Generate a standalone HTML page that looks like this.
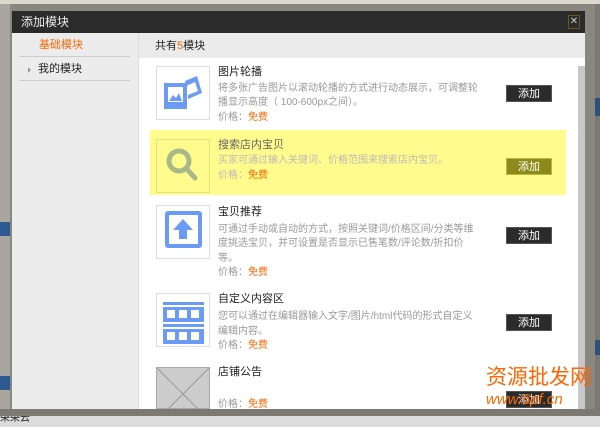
<!DOCTYPE html>
<html><head><meta charset="utf-8"><style>
*{margin:0;padding:0;box-sizing:border-box}
body{width:600px;height:427px;overflow:hidden;position:relative;background:#8a8680;font-family:"Liberation Sans","Noto Sans CJK SC",sans-serif;font-size:10px;color:#222}
.a{position:absolute}
.t{position:absolute;white-space:nowrap;line-height:14px}
.g{color:#999}
.r{color:#f60}
.h{font-size:11px}
.btn{position:absolute;left:506px;width:46px;height:17px;background:#2b2b2b;color:#fff;text-align:center;line-height:16px;font-size:11px;border:1px solid #555}
.ic{position:absolute;left:156px;width:54px;height:54px;border:1px solid #ddd;background:#fff}
</style></head><body>
<div class="a" style="left:0;top:0;width:10px;height:427px;background:#a9a59f"></div>
<div class="a" style="left:595px;top:0;width:5px;height:427px;background:#7c7872"></div>
<div class="a" style="left:595px;top:98px;width:5px;height:18px;background:#2c4f7c"></div>
<div class="a" style="left:595px;top:340px;width:5px;height:15px;background:#2c4f7c"></div>
<div class="a" style="left:0;top:0;width:600px;height:4px;background:#ddd8cc"></div>
<div class="a" style="left:0;top:416px;width:600px;height:11px;background:#dcdcdc"></div>
<div class="t" style="left:0;top:412px;font-size:10px">朵朵云</div>
<div class="a" style="left:0;top:222px;width:10px;height:14px;background:#2c5a90"></div>
<div class="a" style="left:0;top:376px;width:10px;height:14px;background:#2c5a90"></div>
<div class="a" style="left:12px;top:11px;width:573px;height:22px;background:#2b2b2b"></div>
<div class="t" style="left:21px;top:15px;color:#eee;font-size:12px">添加模块</div>
<div class="a" style="left:568px;top:15px;width:12px;height:14px;border:1px solid #6a5420;color:#ccc;font-size:10px;line-height:12px;text-align:center">✕</div>
<div class="a" style="left:12px;top:33px;width:573px;height:376px;background:#fff"></div>
<div class="a" style="left:12px;top:33px;width:127px;height:376px;background:#ececec;border-right:1px solid #ddd"></div>
<div class="a" style="left:139px;top:33px;width:446px;height:25px;background:#ebebeb"></div>
<div class="t h" style="left:39px;top:38px;color:#f60">基础模块</div>
<div class="a" style="left:19px;top:56px;width:111px;height:1px;background:#ccc"></div>
<div class="a" style="left:28px;top:67px;border-left:3px solid #999;border-top:3px solid transparent;border-bottom:3px solid transparent"></div>
<div class="t h" style="left:38px;top:62px">我的模块</div>
<div class="a" style="left:19px;top:80px;width:111px;height:1px;background:#ccc"></div>
<div class="t h" style="left:155px;top:39px">共有<span class="r">5</span>模块</div>
<div class="a" style="left:578px;top:66px;width:7px;height:343px;background:#c8c8c8"></div>
<div class="ic" style="top:66px"><svg width="52" height="52"><rect x="7" y="16" width="23" height="26" fill="#6b9bf5"/><rect x="11" y="20" width="15" height="15" fill="#fff"/><path d="M12 34l4-6 3 3 3-5 3 8z" fill="#6b9bf5"/><path d="M28 14l12-5 5 17-14 6 0-4 10-4-3-9-9 4z" fill="#6b9bf5"/></svg></div>
<div class="t h" style="left:218px;top:65px">图片轮播</div>
<div class="t g" style="left:218px;top:82px">将多张广告图片以滚动轮播的方式进行动态展示，可调整轮</div>
<div class="t g" style="left:218px;top:96px">播显示高度（ 100-600px之间）。</div>
<div class="t g" style="left:218px;top:111px">价格：<span class="r">免费</span></div>
<div class="btn" style="top:85px">添加</div>
<div class="a" style="left:150px;top:130px;width:416px;height:65px;background:#fffb8c"></div>
<div class="ic" style="top:139px;background:#fffb8c;border-color:#e6e27a"><svg width="52" height="52"><circle cx="22" cy="21" r="10" fill="none" stroke="#a8b889" stroke-width="5"/><path d="M29 28l9 10" stroke="#a8b889" stroke-width="5" stroke-linecap="round"/></svg></div>
<div class="t h" style="left:218px;top:138px;color:#666">搜索店内宝贝</div>
<div class="t" style="left:218px;top:154px;color:#bbb">买家可通过输入关键词、价格范围来搜索店内宝贝。</div>
<div class="t" style="left:218px;top:169px;color:#bbb">价格：<span class="r">免费</span></div>
<div class="btn" style="top:158px;background:#8b8a1a;border-color:#bab740">添加</div>
<div class="ic" style="top:205px"><svg width="52" height="52"><rect x="8" y="5" width="37" height="37" rx="3" fill="#6b9bf5"/><rect x="12" y="9" width="29" height="29" fill="#fff"/><path d="M26 13l-10 11h6v9h8v-9h6z" fill="#6b9bf5"/></svg></div>
<div class="t h" style="left:218px;top:205px">宝贝推荐</div>
<div class="t g" style="left:218px;top:223px">可通过手动或自动的方式，按照关键词/价格区间/分类等维</div>
<div class="t g" style="left:218px;top:237px">度挑选宝贝，并可设置是否显示已售笔数/评论数/折扣价</div>
<div class="t g" style="left:218px;top:252px">等。</div>
<div class="t g" style="left:218px;top:266px">价格：<span class="r">免费</span></div>
<div class="btn" style="top:227px">添加</div>
<div class="ic" style="top:293px"><svg width="52" height="52"><rect x="6" y="8" width="41" height="3" fill="#6b9bf5"/><rect x="6" y="13" width="41" height="15" fill="#6b9bf5"/><rect x="6" y="30" width="41" height="3" fill="#6b9bf5"/><rect x="6" y="35" width="41" height="15" fill="#6b9bf5"/><g fill="#fff"><rect x="10" y="16" width="8" height="8"/><rect x="22" y="16" width="8" height="8"/><rect x="34" y="16" width="8" height="8"/><rect x="10" y="38" width="8" height="8"/><rect x="22" y="38" width="8" height="8"/><rect x="34" y="38" width="8" height="8"/></g></svg></div>
<div class="t h" style="left:218px;top:292px">自定义内容区</div>
<div class="t g" style="left:218px;top:310px">您可以通过在编辑器输入文字/图片/html代码的形式自定义</div>
<div class="t g" style="left:218px;top:325px">编辑内容。</div>
<div class="t g" style="left:218px;top:339px">价格：<span class="r">免费</span></div>
<div class="btn" style="top:314px">添加</div>
<div class="ic" style="top:367px;background:#ccc;border-color:#aaa;height:42px"><svg width="52" height="42"><path d="M0 0L52 52M52 0L0 52" stroke="#999"/></svg></div>
<div class="t h" style="left:218px;top:365px">店铺公告</div>
<div class="t g" style="left:218px;top:398px">价格：<span class="r">免费</span></div>
<div class="btn" style="top:391px">添加</div>
<div class="a" style="left:0;top:409px;width:595px;height:7px;background:#7c7872"></div>
<div class="t" style="left:486px;top:366px;color:#f60;font-size:21px;line-height:24px">资源批发网</div>
<div class="t" style="left:486px;top:393px;color:#f60;font-size:15px;font-style:italic">www.6pf.cn</div>
</body></html>
